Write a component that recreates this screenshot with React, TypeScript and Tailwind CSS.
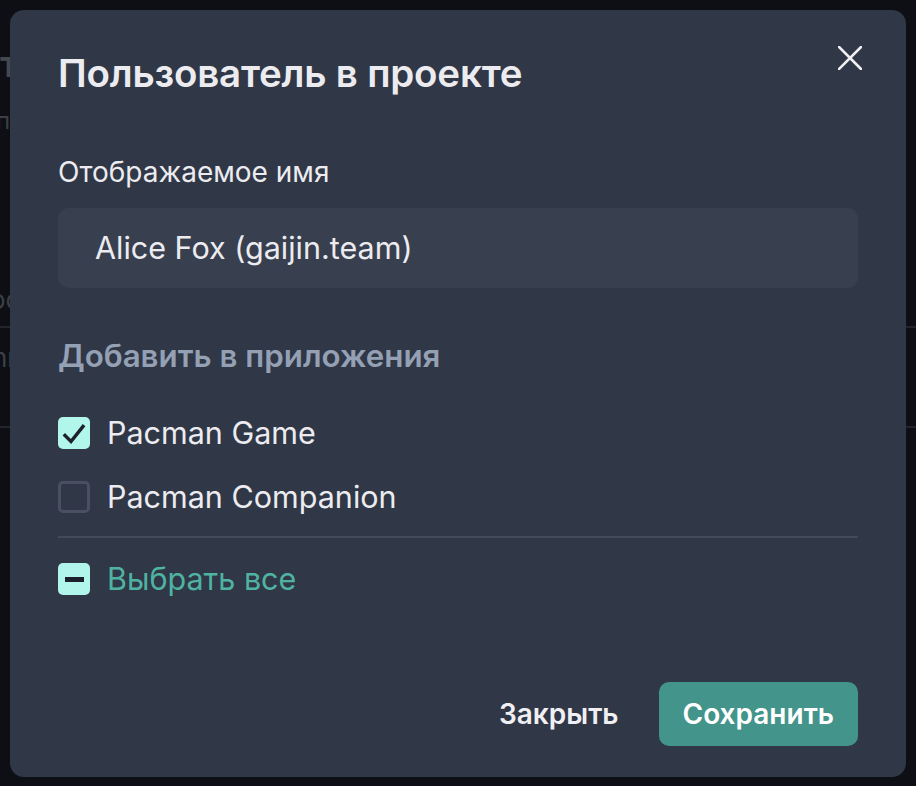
import React from "react";

function CheckBox({ state }: { state: "checked" | "unchecked" | "indeterminate" }) {
  if (state === "unchecked") {
    return <div className="w-[32px] h-[32px] rounded-[5px] border-[3px] border-[#4a5061] shrink-0" />;
  }
  return (
    <div className="w-[32px] h-[32px] rounded-[5px] bg-[#b2f5ea] shrink-0 flex items-center justify-center">
      {state === "checked" ? (
        <svg width="32" height="32" viewBox="0 0 32 32">
          <path d="M7 18.5 L13 24.5 L25 9.5" fill="none" stroke="#1a202c" strokeWidth="3.4" strokeLinecap="square" strokeLinejoin="miter" />
        </svg>
      ) : (
        <div className="w-[19px] h-[5px] bg-[#1a202c]" />
      )}
    </div>
  );
}

export default function App() {
  const font = { fontFamily: "Inter, 'Noto Sans', sans-serif" };
  return (
    <div className="relative w-[916px] h-[786px] bg-[#0d0f14] overflow-hidden" style={font}>
      {/* dim background page */}
      <div className="flex flex-col text-[#3c3f46]">
        <div className="h-[96px] flex items-end text-[36px] font-semibold leading-[48px] text-[#45484f] pb-[8px]">тест</div>
        <div className="h-[50px] text-[24px] leading-[50px] -ml-[4px]">пользователи</div>
        <div className="h-[180px] flex items-end text-[26px] leading-[40px] pb-[6px] -ml-[10px]">ooo</div>
        <div className="h-[2px] bg-[#22252b]" />
        <div className="h-[98px] text-[26px] leading-[60px] -ml-[8px]">nnn</div>
        <div className="h-[2px] bg-[#22252b]" />
      </div>

      {/* modal */}
      <div className="absolute left-[10px] top-[10px] w-[896px] h-[767px] rounded-[14px] bg-[#303746] flex flex-col px-[48px]">
        <button className="absolute left-[828px] top-[36px] w-[24px] h-[24px]">
          <svg width="24" height="24" viewBox="0 0 24 24">
            <path d="M1 1 L23 23 M23 1 L1 23" stroke="#f0f0f2" strokeWidth="2.6" strokeLinecap="square" />
          </svg>
        </button>

        <h2 className="mt-[39px] text-[38.5px] leading-[48px] font-semibold text-[#ececf0] tracking-[-0.2px]">
          Пользователь в проекте
        </h2>

        <label className="mt-[59px] text-[28px] leading-[32px] font-normal text-[#ececf0]">
          Отображаемое имя
        </label>

        <div className="mt-[20px] h-[80px] rounded-[10px] bg-[#383f4f] flex items-center pl-[37px] text-[30.5px] text-[#ececf0]">
          Alice Fox (gaijin.team)
        </div>

        <div className="mt-[50px] text-[31.3px] leading-[36px] font-semibold text-[#94a0b4]">
          Добавить в приложения
        </div>

        <div className="mt-[43px] flex items-center h-[32px] gap-[17px]">
          <CheckBox state="checked" />
          <span className="text-[30.5px] text-[#ececf0]">Pacman Game</span>
        </div>

        <div className="mt-[32px] flex items-center h-[32px] gap-[17px]">
          <CheckBox state="unchecked" />
          <span className="text-[30.5px] text-[#ececf0]">Pacman Companion</span>
        </div>

        <div className="mt-[23px] h-[2px] bg-[#434a5a]" />

        <div className="mt-[25px] flex items-center h-[32px] gap-[17px]">
          <CheckBox state="indeterminate" />
          <span className="text-[30.5px] text-[#4fb3a2]">Выбрать все</span>
        </div>

        <div className="mt-[87px] flex justify-end items-center gap-[16px]">
          <button className="h-[64px] px-[24px] text-[28px] font-semibold text-[#f0f0f4]">Закрыть</button>
          <button className="h-[64px] px-[24px] rounded-[10px] bg-[#43948a] text-[28px] font-semibold text-white">
            Сохранить
          </button>
        </div>
      </div>
    </div>
  );
}
